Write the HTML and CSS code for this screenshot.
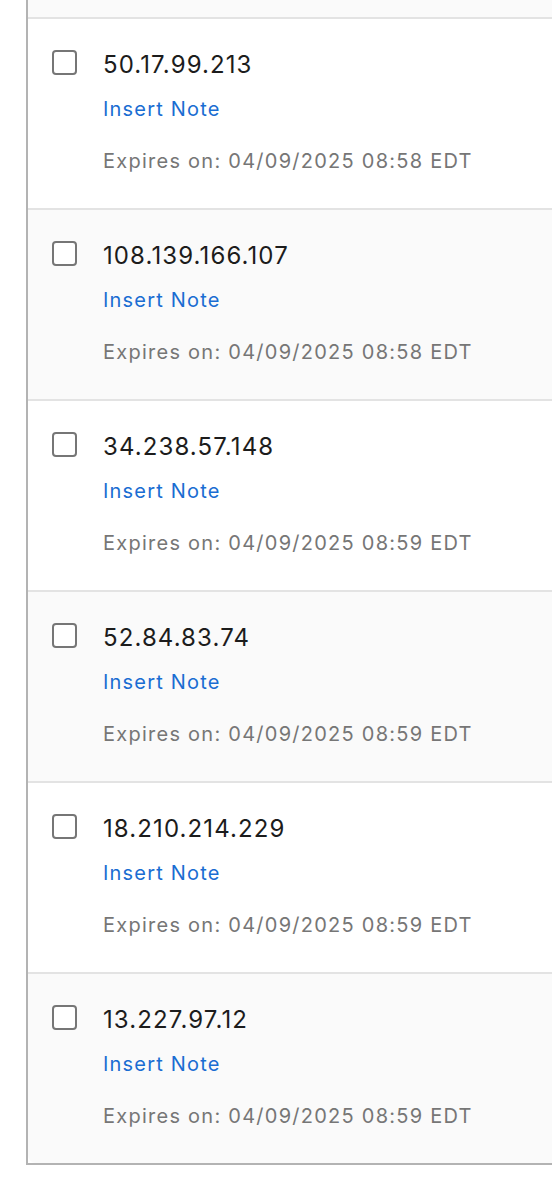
FILE: index.html
```html
<!DOCTYPE html>
<html>
<head>
<meta charset="utf-8">
<link rel="stylesheet" href="styles.css">
</head>
<body>
<div class="list">
  <div class="tail"></div>
  <div class="row">
    <span class="box"></span>
    <div class="info">
      <div class="ip">50.17.99.213</div>
      <a class="note">Insert Note</a>
      <div class="exp">Expires on: 04/09/2025 08:58 EDT</div>
    </div>
  </div>
  <div class="row alt">
    <span class="box"></span>
    <div class="info">
      <div class="ip">108.139.166.107</div>
      <a class="note">Insert Note</a>
      <div class="exp">Expires on: 04/09/2025 08:58 EDT</div>
    </div>
  </div>
  <div class="row">
    <span class="box"></span>
    <div class="info">
      <div class="ip">34.238.57.148</div>
      <a class="note">Insert Note</a>
      <div class="exp">Expires on: 04/09/2025 08:59 EDT</div>
    </div>
  </div>
  <div class="row alt">
    <span class="box"></span>
    <div class="info">
      <div class="ip">52.84.83.74</div>
      <a class="note">Insert Note</a>
      <div class="exp">Expires on: 04/09/2025 08:59 EDT</div>
    </div>
  </div>
  <div class="row">
    <span class="box"></span>
    <div class="info">
      <div class="ip">18.210.214.229</div>
      <a class="note">Insert Note</a>
      <div class="exp">Expires on: 04/09/2025 08:59 EDT</div>
    </div>
  </div>
  <div class="row alt last">
    <span class="box"></span>
    <div class="info">
      <div class="ip">13.227.97.12</div>
      <a class="note">Insert Note</a>
      <div class="exp">Expires on: 04/09/2025 08:59 EDT</div>
    </div>
  </div>
</div>
</body>
</html>
```
FILE: styles.css
```css
html, body {
  margin: 0;
  padding: 0;
  background: #ffffff;
}
body {
  font-family: Inter, "Liberation Sans", sans-serif;
}
.list {
  margin-left: 26px;
  border-left: 2px solid #b3b3b3;
  border-bottom: 2px solid #b3b3b3;
  background: #ffffff;
}
.tail {
  height: 17px;
  background: #fafafa;
}
.row {
  display: flex;
  align-items: flex-start;
  gap: 26px;
  height: 191px;
  box-sizing: border-box;
  padding: 31px 0 0 24px;
  border-top: 2px solid #e3e3e3;
  background: #ffffff;
}
.row.alt {
  background: #fafafa;
}
.row.last {
  border-bottom-left-radius: 8px;
}
.box {
  flex: none;
  width: 25px;
  height: 25px;
  box-sizing: border-box;
  border: 2px solid #767676;
  border-radius: 4px;
  background: #ffffff;
}
.info {
  display: flex;
  flex-direction: column;
}
.ip {
  font-size: 24px;
  line-height: 30px;
  letter-spacing: 1.1px;
  color: #1c1c1c;
}
.note {
  margin-top: 16px;
  font-size: 20px;
  line-height: 26px;
  letter-spacing: 1.2px;
  color: #1a6dd2;
}
.exp {
  margin-top: 26px;
  font-size: 20px;
  line-height: 26px;
  letter-spacing: 1.25px;
  color: #767676;
}
```
